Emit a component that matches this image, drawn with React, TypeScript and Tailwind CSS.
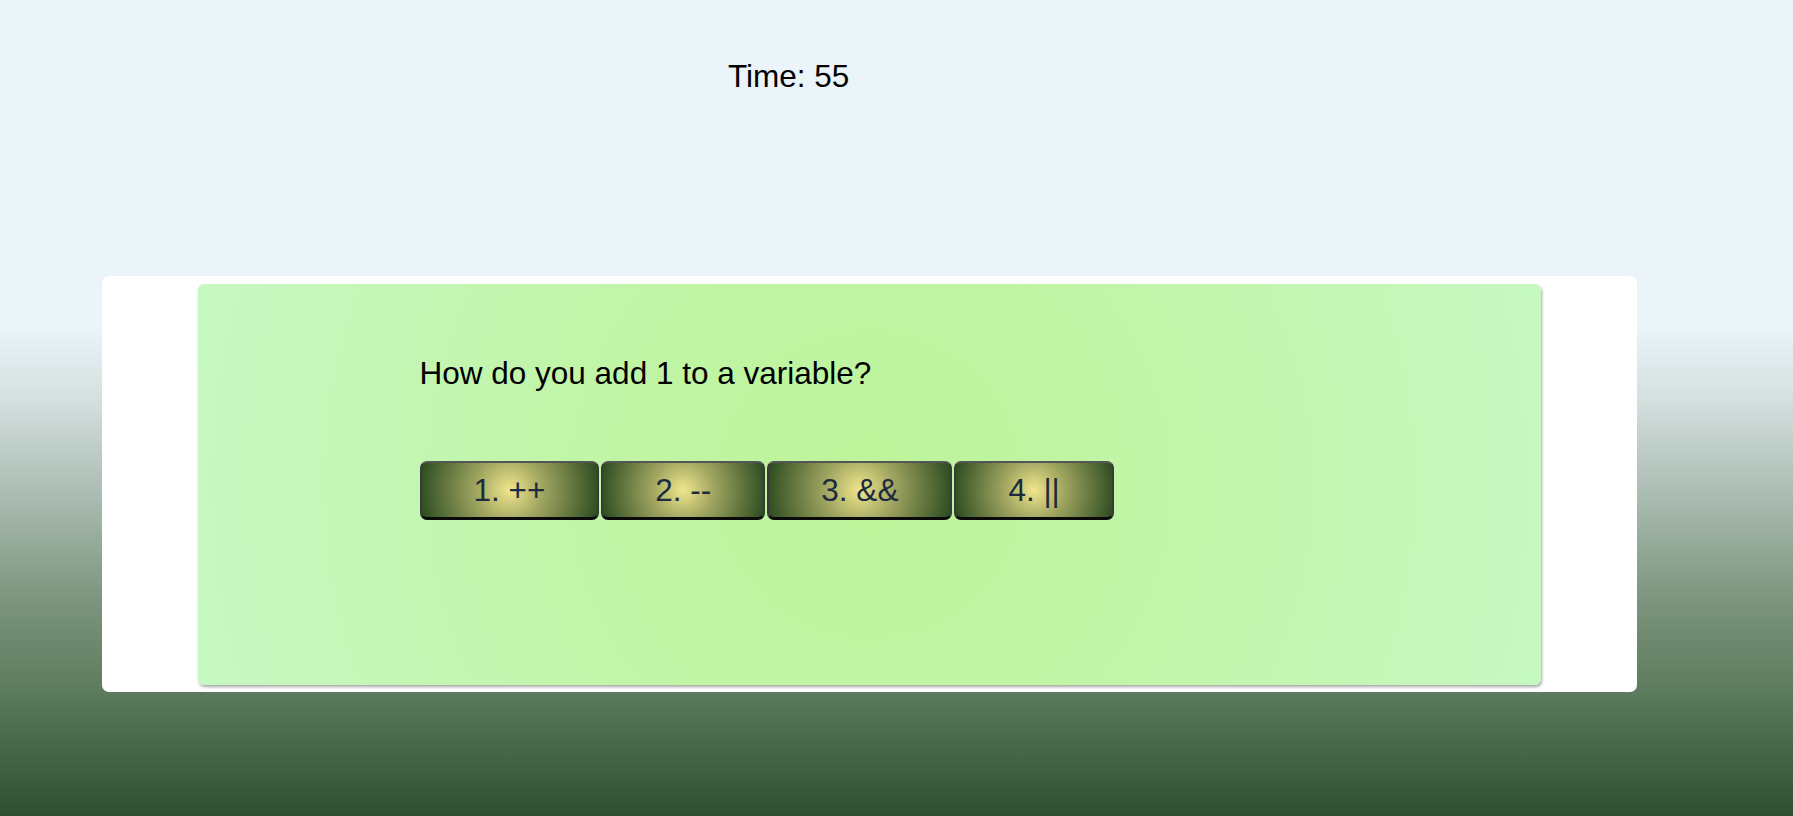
const answers = ['1. ++', '2. --', '3. &&', '4. ||'];

export default function App() {
  return (
    <div
      className="min-h-[816px] w-full bg-[linear-gradient(to_bottom,#ebf4f8_0%,#ebf4f8_40%,#d4dfdf_49%,#a6b8ad_62%,#7b937c_74%,#5f7d60_84%,#2e5030_100%)] font-['Liberation_Sans',Arial,sans-serif] text-black"
    >
      {/* Header */}
      <header className="h-[276px] pl-[728px] pt-[58px]">
        <p className="text-[31.5px] leading-[36px]">Time: 55</p>
      </header>

      {/* Quiz card */}
      <div className="ml-[102px] w-[1535px] rounded-[7px] bg-white px-[96px] pt-[8px] pb-[7px]">
        <div className="h-[401px] rounded-[6px] bg-[radial-gradient(circle_at_center,#bdf49a_0%,#c1f5a8_45%,#c6f8c2_100%)] shadow-[1px_2px_3px_rgba(0,0,0,0.35)]">
          <div className="mx-auto w-[900px] pt-[71px]">
            <h2 className="text-[31.5px] leading-[36px] font-normal">How do you add 1 to a variable?</h2>
            <div className="mt-[70px] flex gap-[2px]">
              {answers.map((a) => (
                <button
                  key={a}
                  className="h-[59px] rounded-[7px] border-2 border-t-[#555555] border-x-[#3a3a3a] border-b-[3px] border-b-[#0a0a0a] bg-[radial-gradient(circle_at_center,#f0e68c_0%,#a3a862_35%,#2b4b1f_100%)] px-[52px] text-[31.5px] leading-[36px] text-[#1c2b3e]"
                >
                  {a}
                </button>
              ))}
            </div>
          </div>
        </div>
      </div>
    </div>
  );
}
